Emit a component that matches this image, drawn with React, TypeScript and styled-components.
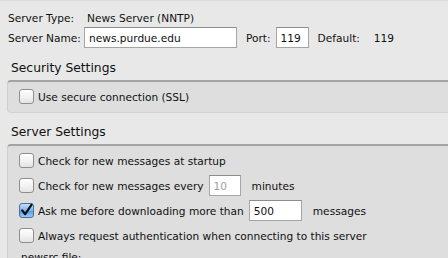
import React from 'react';
import styled, { createGlobalStyle } from 'styled-components';

const GlobalStyle = createGlobalStyle`
  html, body {
    margin: 0;
    padding: 0;
    background: #e8e8e8;
    overflow: hidden;
  }
  body {
    font-family: "DejaVu Sans", Verdana, sans-serif;
    font-size: 10.6px;
    color: #111;
  }
`;

const Page = styled.div`
  width: 448px;
  height: 258px;
  overflow: hidden;
  border-top: 1px solid #dcdcdc;
  box-sizing: border-box;
`;

const ServerInfo = styled.div`
  display: grid;
  grid-template-columns: 76px auto;
  row-gap: 3px;
  padding: 11px 0 0 8px;
  align-items: center;
`;

const Label = styled.span<{ $pad?: number }>`
  white-space: nowrap;
  padding-left: ${(p) => p.$pad ?? 0}px;
`;

const NameRow = styled.div`
  display: flex;
  align-items: center;
`;

const TextField = styled.input<{ $w: number; $muted?: boolean }>`
  width: ${(p) => p.$w}px;
  height: 21px;
  box-sizing: border-box;
  border: 1px solid #a5a5a5;
  border-top-color: #8c8c8c;
  background: #fff;
  padding: 1px 4px 0;
  font-family: inherit;
  font-size: 10.6px;
  color: ${(p) => (p.$muted ? '#a0a0a0' : '#111')};
  outline: none;
  margin: 0;
`;

const Gap = styled.span<{ $w: number }>`
  display: inline-block;
  flex: none;
  width: ${(p) => p.$w}px;
`;

const SectionTitle = styled.div<{ $top: number }>`
  font-size: 12.3px;
  padding-left: 11px;
  margin-top: ${(p) => p.$top}px;
  height: 17px;
  line-height: 17px;
`;

const Panel = styled.div`
  margin-left: 7px;
  margin-right: -8px;
  margin-top: 3px;
  background: #dedede;
  border: 1px solid #cfcfcf;
  border-top: 2px solid #a3a3a3;
  border-bottom-color: #d2d2d2;
  border-radius: 4px 0 0 4px;
  padding: 6px 0 7px 11px;
  display: flex;
  flex-direction: column;
  gap: 8px;
`;

const Row = styled.label`
  display: flex;
  align-items: center;
  height: 17px;
  white-space: nowrap;
`;

const Box = styled.span`
  width: 15px;
  height: 15px;
  margin-right: 4px;
  flex: none;
  display: inline-block;
`;

const Tail = styled.span`
  padding-left: 2px;
  margin-top: -1px;
`;

function Checkbox({ checked }: { checked?: boolean }) {
  return (
    <Box>
      <svg width="15" height="15" viewBox="0 0 15 15">
        <defs>
          <linearGradient id="cbOff" x1="0" y1="0" x2="0" y2="1">
            <stop offset="0" stopColor="#ffffff" />
            <stop offset="0.5" stopColor="#f3f3f3" />
            <stop offset="1" stopColor="#e2e2e2" />
          </linearGradient>
          <linearGradient id="cbOn" x1="0" y1="0" x2="0" y2="1">
            <stop offset="0" stopColor="#c9e1fb" />
            <stop offset="0.5" stopColor="#7fb3ef" />
            <stop offset="0.55" stopColor="#5d9ae6" />
            <stop offset="1" stopColor="#9ecdf9" />
          </linearGradient>
        </defs>
        <rect
          x="0.5"
          y="0.5"
          width="14"
          height="14"
          rx="2.5"
          fill={checked ? 'url(#cbOn)' : 'url(#cbOff)'}
          stroke={checked ? '#4a6f9c' : '#8e8e8e'}
        />
        {checked && (
          <path
            d="M3.2 7.4 L6.2 11.2 L12.6 1.6"
            fill="none"
            stroke="#111"
            strokeWidth="2.2"
            strokeLinecap="round"
            strokeLinejoin="round"
          />
        )}
      </svg>
    </Box>
  );
}

export default function App() {
  return (
    <Page>
      <GlobalStyle />
      <ServerInfo>
        <Label>Server Type:</Label>
        <Label $pad={3}>News Server (NNTP)</Label>
        <Label>Server Name:</Label>
        <NameRow>
          <TextField $w={153} defaultValue="news.purdue.edu" />
          <Gap $w={9} />
          <Label>Port:</Label>
          <Gap $w={5} />
          <TextField $w={33} defaultValue="119" />
          <Gap $w={9} />
          <Label>Default:</Label>
          <Gap $w={14} />
          <Label>119</Label>
        </NameRow>
      </ServerInfo>

      <SectionTitle $top={12}>Security Settings</SectionTitle>
      <Panel>
        <Row>
          <Checkbox />
          Use secure connection (SSL)
        </Row>
      </Panel>

      <SectionTitle $top={11}>Server Settings</SectionTitle>
      <Panel>
        <Row>
          <Checkbox />
          Check for new messages at startup
        </Row>
        <Row>
          <Checkbox />
          Check for new messages every
          <Gap $w={5} />
          <TextField $w={32} $muted defaultValue="10" />
          <Gap $w={11} />
          minutes
        </Row>
        <Row>
          <Checkbox checked />
          Ask me before downloading more than
          <Gap $w={5} />
          <TextField $w={53} defaultValue="500" />
          <Gap $w={11} />
          messages
        </Row>
        <Row>
          <Checkbox />
          Always request authentication when connecting to this server
        </Row>
        <Tail>newsrc file:</Tail>
      </Panel>
    </Page>
  );
}
